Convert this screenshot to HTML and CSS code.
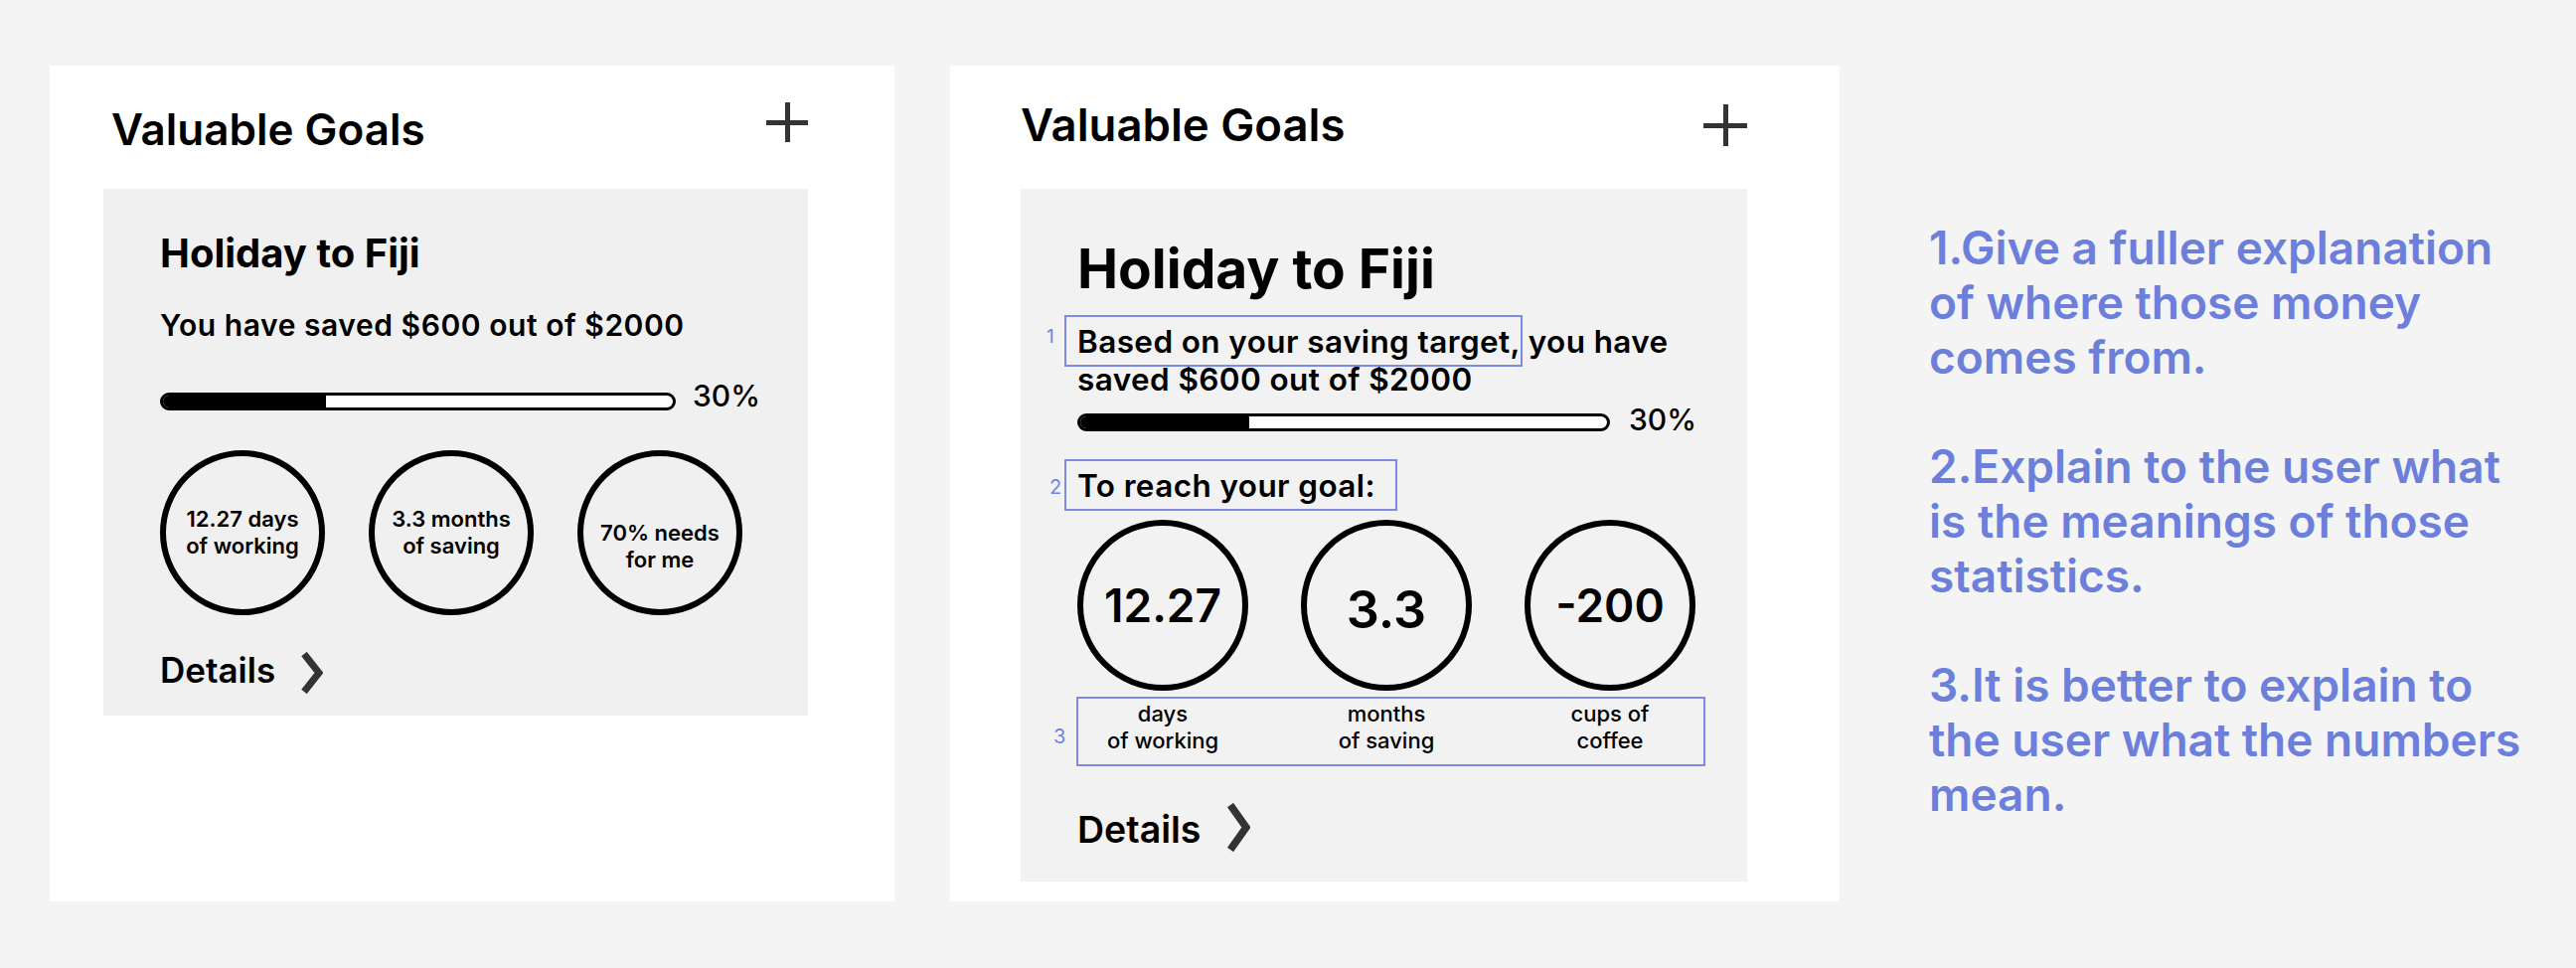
FILE: index.html
```html
<!DOCTYPE html>
<html lang="en">
<head>
<meta charset="utf-8">
<title>Valuable Goals – review</title>
<link rel="stylesheet" href="styles.css">
</head>
<body>
<div class="canvas">
  <section class="panel panel-a">
    <header class="panel-head">
      <h2 class="panel-title">Valuable Goals</h2>
      <span class="plus" aria-label="Add goal"></span>
    </header>
    <article class="goal goal-a">
      <h3 class="goal-title">Holiday to Fiji</h3>
      <p class="goal-text">You have saved $600 out of $2000</p>
      <div class="progress">
        <div class="bar"><div class="fill" style="width:32%"></div></div>
        <span class="pct">30%</span>
      </div>
      <div class="stats">
        <div class="stat"><span>12.27 days<br>of working</span></div>
        <div class="stat"><span>3.3 months<br>of saving</span></div>
        <div class="stat stat-low"><span>70% needs<br>for me</span></div>
      </div>
      <a class="details">Details
        <svg class="chev" viewBox="0 0 22 42" width="22" height="42"><polyline points="3,2 18,21 3,40" fill="none" stroke="#333" stroke-width="7"/></svg>
      </a>
    </article>
  </section>

  <section class="panel panel-b">
    <header class="panel-head">
      <h2 class="panel-title">Valuable Goals</h2>
      <span class="plus" aria-label="Add goal"></span>
    </header>
    <article class="goal goal-b">
      <h3 class="goal-title">Holiday to Fiji</h3>
      <p class="goal-text"><span class="hl hl-1"><span class="hl-num">1</span>Based on your saving target,</span> you have<br>saved $600 out of $2000</p>
      <div class="progress">
        <div class="bar"><div class="fill" style="width:32%"></div></div>
        <span class="pct">30%</span>
      </div>
      <p class="goal-text reach"><span class="hl hl-2"><span class="hl-num">2</span>To reach your goal:</span></p>
      <div class="stats">
        <div class="stat"><span class="num">12.27</span></div>
        <div class="stat"><span class="num num-big">3.3</span></div>
        <div class="stat"><span class="num">-200</span></div>
      </div>
      <div class="labels">
        <span class="hl-num label-num">3</span>
        <span class="label">days<br>of working</span>
        <span class="label">months<br>of saving</span>
        <span class="label">cups of<br>coffee</span>
      </div>
      <a class="details">Details
        <svg class="chev" viewBox="0 0 23 49" width="23" height="49"><polyline points="3,2 19,24.5 3,47" fill="none" stroke="#333" stroke-width="7.5"/></svg>
      </a>
    </article>
  </section>

  <aside class="notes">
    <p>1.Give a fuller explanation<br>of where those money<br>comes from.</p>
    <p>2.Explain to the user what<br>is the meanings of those<br>statistics.</p>
    <p>3.It is better to explain to<br>the user what the numbers<br>mean.</p>
  </aside>
</div>
</body>
</html>
```

FILE: styles.css
```css
* { box-sizing: border-box; }

html, body {
  margin: 0;
  padding: 0;
  background: #f4f4f4;
  font-family: Inter, "Noto Sans", "Liberation Sans", sans-serif;
  color: #000;
}

.canvas {
  display: flex;
  align-items: flex-start;
  padding: 66px 0 0 50px;
}

.panel {
  background: #fff;
  height: 841px;
  flex: none;
}

.panel-a {
  width: 850px;
  padding: 39px 87px 0 54px;
}

.panel-b {
  width: 895px;
  margin-left: 56px;
  padding: 35px 93px 0 71px;
}

.panel-head {
  display: flex;
  justify-content: space-between;
  align-items: flex-start;
}

.panel-a .panel-head { padding-left: 8px; }

.panel-title {
  margin: 0;
  font-size: 44px;
  line-height: 50px;
  font-weight: 600;
}

.panel-b .panel-title { font-size: 45.5px; }

.plus {
  position: relative;
  width: 42px;
  height: 40px;
  margin-top: -2px;
}

.plus::before,
.plus::after {
  content: "";
  position: absolute;
  background: #333;
}

.plus::before { left: 0; right: 0; top: 18px; height: 4.5px; }
.plus::after { top: 0; bottom: 0; left: 19px; width: 4.5px; }

.panel-b .plus { width: 44px; height: 42px; margin-top: 4px; }
.panel-b .plus::before { top: 19px; }
.panel-b .plus::after { left: 20px; }

.goal { background: #f0f0f0; }

.goal-a {
  margin-top: 35px;
  padding: 41px 40px 22px 57px;
}

.goal-b {
  background: #f2f2f2;
  margin-top: 39px;
  padding: 47px 40px 30px 57px;
}

.goal-title {
  margin: 0;
  font-weight: 700;
  font-size: 40px;
  line-height: 48px;
}

.goal-b .goal-title {
  font-size: 55px;
  line-height: 66px;
}

.goal-text {
  margin: 30px 0 0;
  font-size: 30px;
  line-height: 36px;
  font-weight: 600;
  letter-spacing: 0.55px;
}

.goal-b .goal-text {
  margin-top: 22px;
  line-height: 38px;
  font-size: 31.5px;
  letter-spacing: 0.4px;
}

.goal-b .goal-text.reach {
  margin-top: 31px;
  line-height: 36px;
}

.progress {
  display: flex;
  align-items: flex-start;
  height: 36px;
  margin-top: 35px;
}

.goal-b .progress { margin-top: 3px; }

.bar {
  width: 519px;
  height: 18px;
  margin-top: 15px;
  border: 3px solid #000;
  border-radius: 9px;
  background: #fff;
  overflow: hidden;
  flex: none;
}

.goal-b .bar {
  width: 536px;
  height: 18px;
  margin-top: 12px;
}

.fill {
  height: 100%;
  background: #000;
}

.pct {
  margin-left: 17px;
  font-size: 30px;
  line-height: 36px;
  font-weight: 500;
}

.goal-b .pct { margin-left: 19px; }

.stats {
  display: flex;
  gap: 44px;
  margin-top: 37px;
}

.goal-b .stats {
  gap: 53px;
  margin-top: 16px;
}

.stat {
  width: 166px;
  height: 166px;
  border: 6px solid #000;
  border-radius: 50%;
  display: flex;
  align-items: center;
  justify-content: center;
  text-align: center;
  font-size: 22px;
  line-height: 27px;
  font-weight: 600;
  flex: none;
}

.stat-low span { padding-top: 28px; }

.goal-b .stat {
  width: 172px;
  height: 172px;
}

.num {
  font-size: 46px;
  line-height: 56px;
  font-weight: 600;
}

.num-big {
  font-size: 52px;
  padding-top: 10px;
}

.labels {
  position: relative;
  display: flex;
  gap: 55px;
  width: 633px;
  margin: 6px 0 0 -1px;
  padding: 2px 0 10px 0;
  border: 2px solid #7b8ce0;
}

.label {
  width: 170px;
  text-align: center;
  font-size: 22px;
  line-height: 27px;
  font-weight: 500;
}

.hl {
  position: relative;
}

.hl::before {
  content: "";
  position: absolute;
  left: -13px;
  right: -3px;
  top: -7px;
  bottom: -6px;
  border: 2px solid #7b8ce0;
}

.hl-2::before { right: -22px; }

.hl-num {
  position: absolute;
  color: #7084dc;
  font-size: 19px;
  line-height: 23px;
  font-weight: 400;
  letter-spacing: 0;
}

.hl-1 .hl-num { left: -31px; top: 3px; }
.hl-2 .hl-num { left: -28px; top: 10px; font-size: 20px; }

.label-num {
  left: -25px;
  top: 26px;
  font-size: 20px;
  line-height: 24px;
}

.details {
  display: flex;
  align-items: flex-start;
  margin-top: 35px;
  font-size: 35px;
  line-height: 40px;
  font-weight: 600;
  color: #000;
}

.goal-b .details {
  margin-top: 44px;
  font-size: 37.5px;
}

.chev {
  display: block;
  margin: 2px 0 0 26px;
}

.goal-b .chev { margin: -7px 0 0 27px; }

.notes {
  margin: 156px 0 0 90px;
  color: #6b7fdb;
  font-size: 46px;
  line-height: 55px;
  font-weight: 600;
}

.notes p { margin: 0 0 55px; }
```
